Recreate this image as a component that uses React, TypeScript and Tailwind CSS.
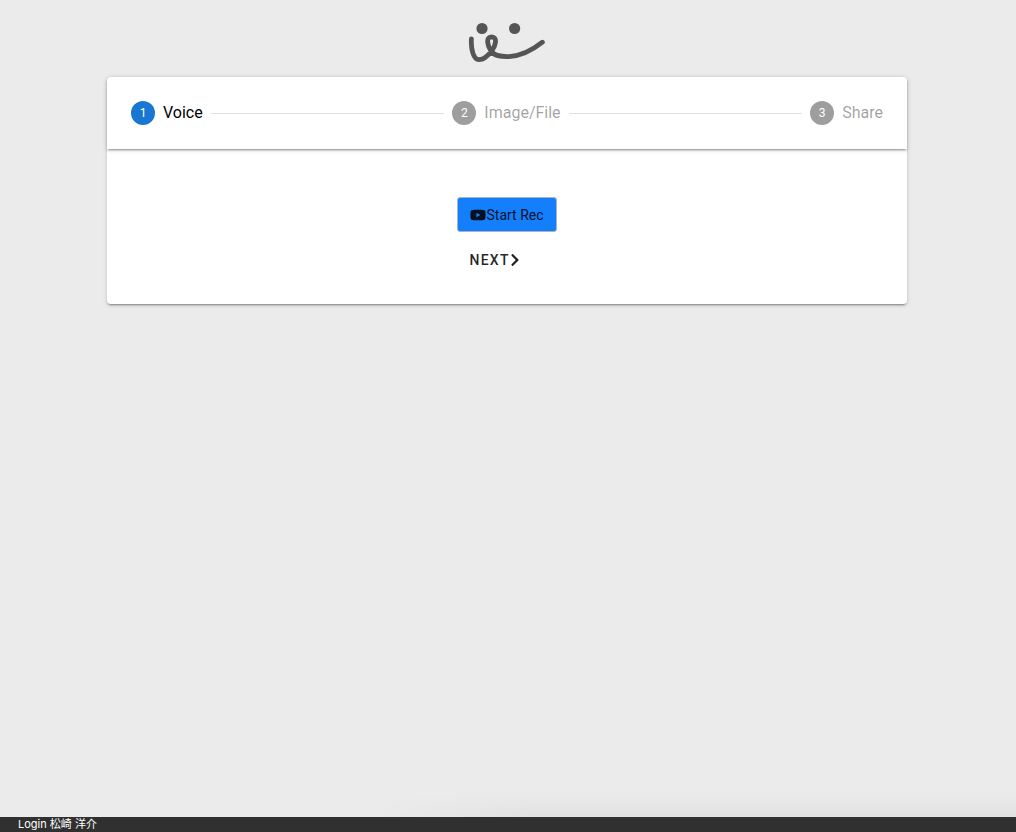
import { Fragment } from 'react';
import { FaChevronRight, FaYoutube } from 'react-icons/fa';
import clsx from 'clsx';

const steps = ['Voice', 'Image/File', 'Share'];

const Logo = () => (
  <svg viewBox="0 0 80 44" className="h-11 w-20" fill="none" role="img" aria-label="logo">
    <circle cx="15" cy="8.5" r="5.6" fill="#555" />
    <circle cx="47.6" cy="8.5" r="5.6" fill="#555" />
    <path
      d="M4.400 18.800 C3.800 28 6 39.500 12 39.700 C17 39.800 22 34.500 25 30.500 C28.500 26 31 17 24.500 16.800 C18.500 16.800 20.500 26 24 31 C28 36.500 35 36.800 42 36.600 C55 36 65 30.500 75.400 22.200"
      stroke="#555"
      strokeWidth="4.800"
      strokeLinecap="round"
      strokeLinejoin="round"
    />
  </svg>
);

const StepHeader = ({ current }: { current: number }) => (
  <ol className="flex h-[72px] items-center gap-2 rounded-t px-6 shadow-[0_3px_1px_-2px_rgba(0,0,0,0.2),0_2px_2px_0_rgba(0,0,0,0.14),0_1px_5px_0_rgba(0,0,0,0.12)]">
    {steps.map((label, i) => {
      const active = i + 1 === current;
      return (
        <Fragment key={label}>
          {i > 0 && <li aria-hidden="true" className="h-px flex-1 bg-black/12" />}
          <li className="flex items-center gap-2" aria-current={active ? 'step' : undefined}>
            <span
              className={clsx(
                'flex h-6 w-6 items-center justify-center rounded-full text-xs text-white',
                active ? 'bg-[#1976d2]' : 'bg-[#9e9e9e]'
              )}
            >
              {i + 1}
            </span>
            <span className={clsx('text-base leading-4', active ? 'text-black' : 'text-black/38')}>
              {label}
            </span>
          </li>
        </Fragment>
      );
    })}
  </ol>
);

export default function App() {
  return (
    <div className="flex min-h-screen flex-col bg-[#ebebeb] font-[Roboto,'Noto_Sans_CJK_JP',sans-serif]">
      <div className="pr-0.5">
        <header className="flex justify-center pt-5 pb-[13px]">
          <Logo />
        </header>

        <main className="mx-auto w-full max-w-[800px]">
          <div className="rounded bg-white shadow-[0_3px_1px_-2px_rgba(0,0,0,0.2),0_2px_2px_0_rgba(0,0,0,0.14),0_1px_5px_0_rgba(0,0,0,0.12)]">
            <StepHeader current={1} />
            <div className="flex justify-center px-6 pt-12 pb-[26px]">
              <div className="flex flex-col items-start gap-[10px]">
                <button
                  type="button"
                  className="flex h-[35px] items-center rounded-[3px] border border-[#a9b4c2] bg-[#147efb] px-3 text-sm text-black/87"
                >
                  <FaYoutube className="h-4 w-4" />
                  Start Rec
                </button>
                <button
                  type="button"
                  className="flex h-9 items-center rounded px-3 text-sm font-medium tracking-[1.25px] text-black/87 uppercase"
                >
                  Next
                  <FaChevronRight className="h-3.5 w-2.5" />
                </button>
              </div>
            </div>
          </div>
        </main>
      </div>

      <div className="mt-auto ml-[37%] h-6 bg-linear-to-t from-black/4 to-transparent mask-l-from-75%" />
      <footer className="bg-[#303030] px-[18px] font-[Inter,'Noto_Sans_CJK_JP',sans-serif] text-[11px] leading-[15px] text-white">
        Login 松崎 洋介
      </footer>
    </div>
  );
}
